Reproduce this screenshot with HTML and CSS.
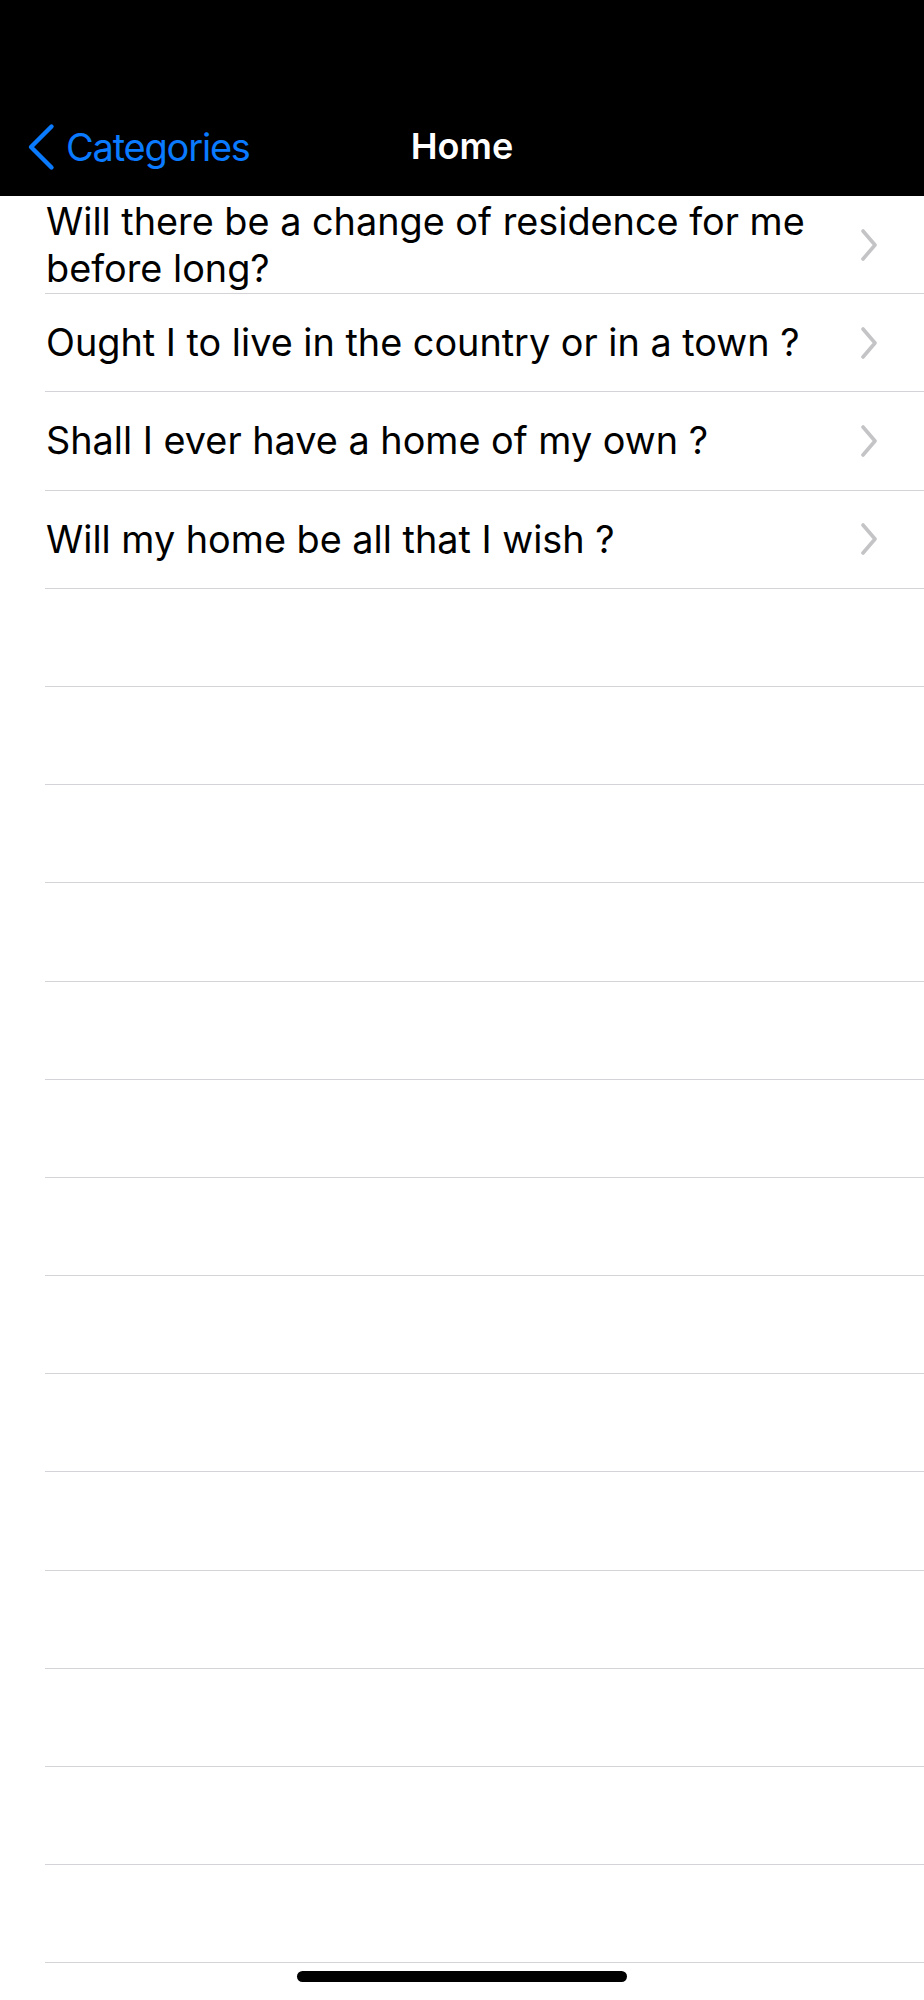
FILE: index.html
```html
<!DOCTYPE html>
<html lang="en">
<head>
    <meta charset="UTF-8">
    <meta name="viewport" content="width=device-width, initial-scale=1.0">
    <title>Home</title>
    <link rel="stylesheet" href="styles.css">
</head>
<body>

    <!-- Шапка -->
    <header class="top-bar">
        <div class="status-bar"></div>
        <nav class="nav-bar">
            <a class="back-button" href="#">
                <svg class="back-chevron" width="28" height="48" viewBox="0 0 28 48">
                    <path d="M24.5 3.5 L4 24 L24.5 44.5" fill="none" stroke="#0a7aff" stroke-width="4.4" stroke-linecap="round" stroke-linejoin="round" />
                </svg>
                <span>Categories</span>
            </a>
            <div class="nav-title">Home</div>
            <div></div>
        </nav>
    </header>

    <!-- Список питань -->
    <ul class="question-list">
        <li class="row">
            <span class="row-text">Will there be a change of residence for me before long?</span>
            <svg class="row-chevron" width="18" height="32" viewBox="0 0 18 32"><path d="M3 2 L15 16 L3 30" /></svg>
        </li>
        <li class="row">
            <span class="row-text">Ought I to live in the country or in a town ?</span>
            <svg class="row-chevron" width="18" height="32" viewBox="0 0 18 32"><path d="M3 2 L15 16 L3 30" /></svg>
        </li>
        <li class="row">
            <span class="row-text">Shall I ever have a home of my own ?</span>
            <svg class="row-chevron" width="18" height="32" viewBox="0 0 18 32"><path d="M3 2 L15 16 L3 30" /></svg>
        </li>
        <li class="row">
            <span class="row-text">Will my home be all that I wish ?</span>
            <svg class="row-chevron" width="18" height="32" viewBox="0 0 18 32"><path d="M3 2 L15 16 L3 30" /></svg>
        </li>
        <li class="row empty"></li>
        <li class="row empty"></li>
        <li class="row empty"></li>
        <li class="row empty"></li>
        <li class="row empty"></li>
        <li class="row empty"></li>
        <li class="row empty"></li>
        <li class="row empty"></li>
        <li class="row empty"></li>
        <li class="row empty"></li>
        <li class="row empty"></li>
        <li class="row empty"></li>
        <li class="row empty"></li>
        <li class="row empty"></li>
    </ul>

    <div class="home-indicator"></div>

</body>
</html>
```

FILE: styles.css
```css
/* Загальні стилі */
body {
    margin: 0;
    height: 2000px;
    overflow: hidden;
    position: relative;
    background-color: #fff;
    font-family: Inter, "Noto Sans", sans-serif;
    color: #000;
}

/* Шапка */
.top-bar {
    background-color: #000;
}

.status-bar {
    height: 98px;
}

.nav-bar {
    height: 98px;
    display: grid;
    grid-template-columns: 1fr auto 1fr;
    align-items: center;
}

    .back-button {
        display: flex;
        align-items: center;
        gap: 11px;
        padding-left: 27px;
        color: #0a7aff;
        text-decoration: none;
        font-size: 38px;
        letter-spacing: -1.2px;
    }

    .back-chevron {
        display: block;
        flex-shrink: 0;
    }

    .nav-title {
        color: #fff;
        font-size: 36px;
        font-weight: 600;
        margin-top: -2px;
    }

/* Список */
.question-list {
    list-style: none;
    margin: 0;
    padding: 0;
}

    .row {
        height: 98.2px;
        box-sizing: border-box;
        margin-left: 45px;
        padding-right: 46px;
        border-bottom: 1px solid #d4d4d8;
        display: flex;
        align-items: center;
        gap: 20px;
    }

    .row-text {
        flex: 1;
        font-size: 37.8px;
        line-height: 47px;
        padding-left: 1px;
    }

    .row-chevron {
        display: block;
        flex-shrink: 0;
    }

        .row-chevron path {
            fill: none;
            stroke: #c4c4c7;
            stroke-width: 3.6;
            stroke-linecap: round;
            stroke-linejoin: round;
        }

/* Індикатор */
.home-indicator {
    position: absolute;
    left: 297px;
    top: 1971px;
    width: 330px;
    height: 11px;
    border-radius: 6px;
    background-color: #000;
}
```
